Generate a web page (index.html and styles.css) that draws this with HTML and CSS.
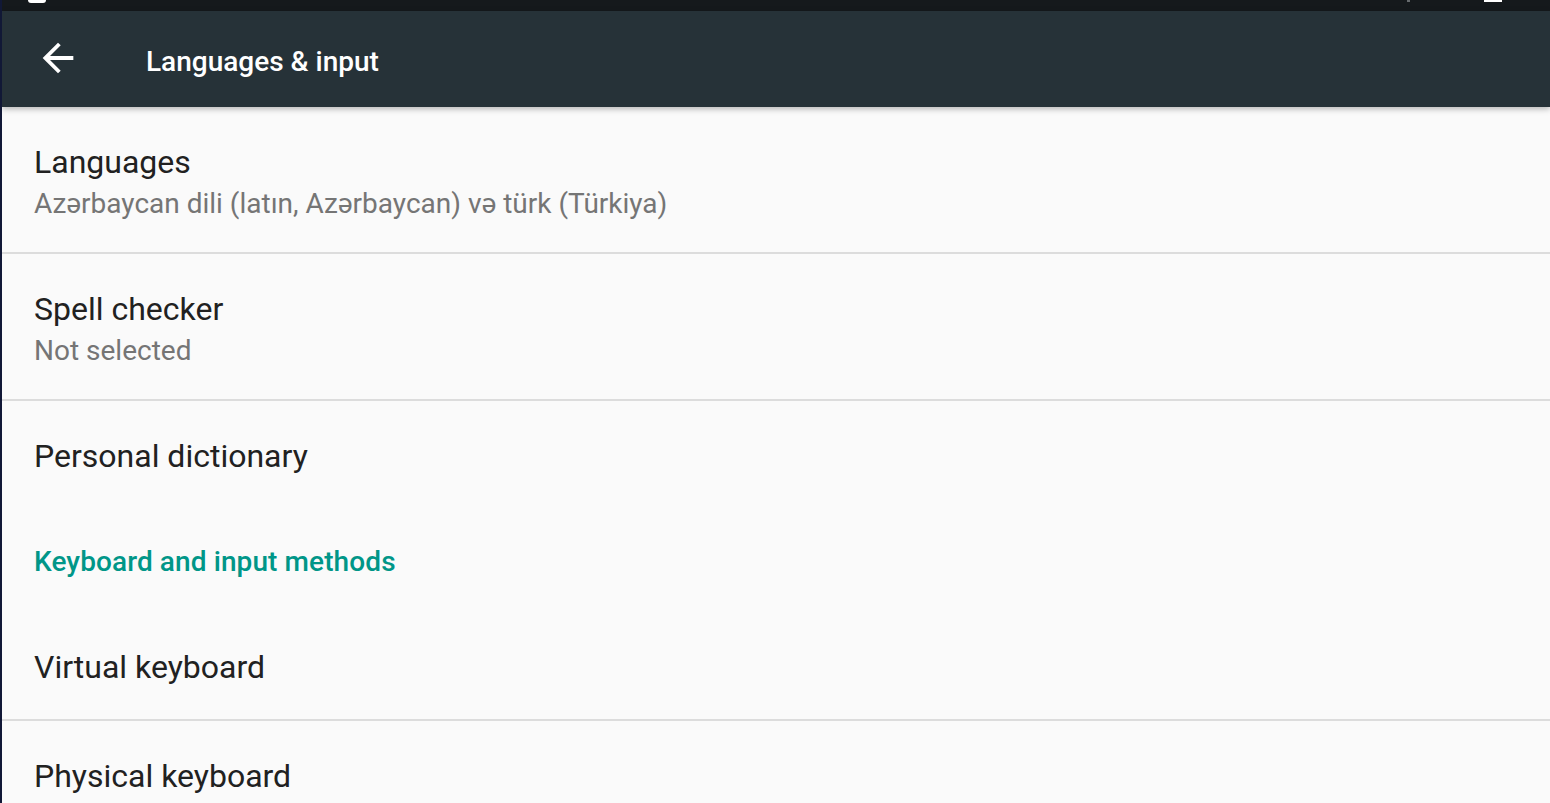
FILE: index.html
```html
<!DOCTYPE html>
<html lang="en">

<head>
  <meta charset="UTF-8">
  <meta name="viewport" content="width=device-width, initial-scale=1.0">
  <title>Languages &amp; input</title>
  <link rel="stylesheet" href="styles.css">
</head>

<body>
  <div class="screen">
    <div class="status-bar">
      <span class="status-left"></span>
      <span class="status-dot"></span>
      <span class="status-battery"></span>
    </div>

    <header class="toolbar">
      <button type="button" class="back-btn" aria-label="Back">
        <svg viewBox="0 0 24 24" width="46" height="46">
          <path d="M20 11H7.83l5.59-5.59L12 4l-8 8 8 8 1.41-1.41L7.83 13H20v-2z" fill="#ffffff" />
        </svg>
      </button>
      <h1 class="toolbar-title">Languages &amp; input</h1>
    </header>

    <main class="settings-list">
      <div class="pref pref-two-line">
        <div class="pref-title">Languages</div>
        <div class="pref-summary">Azərbaycan dili (latın, Azərbaycan) və türk (Türkiya)</div>
      </div>

      <div class="pref pref-two-line">
        <div class="pref-title">Spell checker</div>
        <div class="pref-summary">Not selected</div>
      </div>

      <div class="pref pref-last">
        <div class="pref-title">Personal dictionary</div>
      </div>

      <div class="pref-category">Keyboard and input methods</div>

      <div class="pref pref-divided">
        <div class="pref-title">Virtual keyboard</div>
      </div>

      <div class="pref">
        <div class="pref-title">Physical keyboard</div>
      </div>
    </main>
  </div>
</body>

</html>
```

FILE: styles.css
```css
body {
  margin: 0;
  background-color: #111836;
  font-family: Roboto, "Noto Sans", Arial, sans-serif;
  overflow: hidden;
}

.screen {
  margin-left: 2px;
  height: 803px;
  background-color: #fafafa;
  overflow: hidden;
}

.status-bar {
  height: 11px;
  background-color: #15191c;
  display: flex;
  align-items: flex-start;
}

.status-left {
  width: 18px;
  height: 3px;
  margin-left: 26px;
  background-color: #ffffff;
  border-radius: 0 0 4px 4px;
}

.status-dot {
  width: 3px;
  height: 2px;
  margin-left: auto;
  background-color: #666a6d;
}

.status-battery {
  width: 18px;
  height: 2px;
  margin-left: 74px;
  margin-right: 48px;
  background-color: #ffffff;
}

.toolbar {
  position: relative;
  z-index: 1;
  height: 96px;
  background-color: #263238;
  display: flex;
  align-items: center;
  box-shadow: 0 2px 6px rgba(0, 0, 0, 0.28);
}

.back-btn {
  background: none;
  border: none;
  padding: 0;
  margin-left: 33px;
  margin-top: -3px;
  width: 46px;
  height: 46px;
  cursor: pointer;
}

.back-btn svg {
  display: block;
}

.toolbar-title {
  margin: 6px 0 0 65px;
  font-size: 28px;
  font-weight: 500;
  color: #ffffff;
  line-height: 40px;
}

.pref {
  padding: 35px 0 35px 32px;
}

.pref-two-line {
  padding-bottom: 27px;
  border-bottom: 2px solid #dcdcdc;
}

.pref-divided {
  padding-bottom: 32px;
  border-bottom: 2px solid #dcdcdc;
}

.pref-title {
  font-size: 32px;
  line-height: 40px;
  color: #212121;
}

.pref-summary {
  font-size: 28px;
  line-height: 43px;
  color: #757575;
}

.pref-category {
  padding: 33px 0 32px 32px;
  font-size: 28px;
  line-height: 36px;
  font-weight: 500;
  letter-spacing: 0.1px;
  color: #009688;
}
```
